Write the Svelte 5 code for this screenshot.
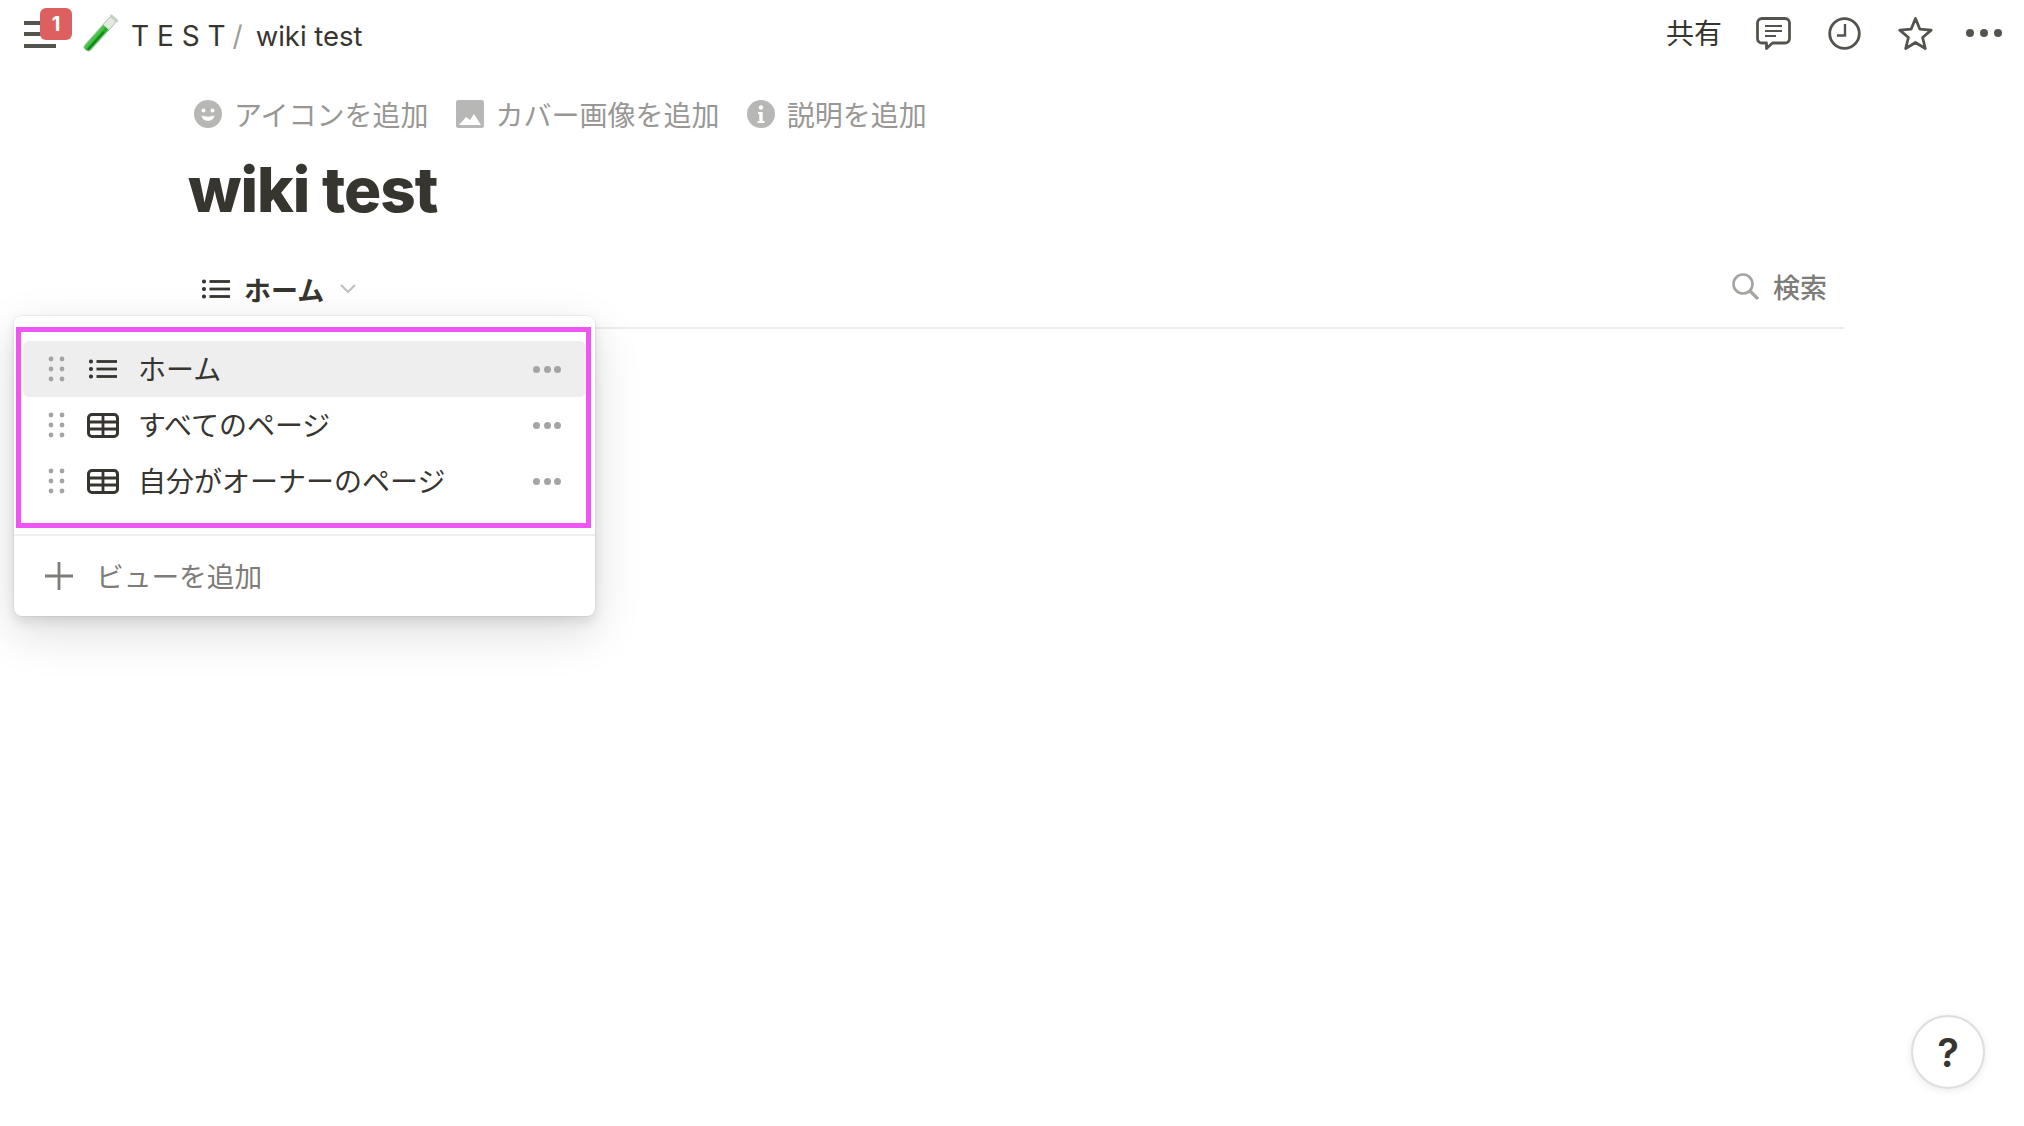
<script>
  const rows = [
    { label: 'ホーム', icon: 'list', active: true },
    { label: 'すべてのページ', icon: 'table' },
    { label: '自分がオーナーのページ', icon: 'table' }
  ];
</script>

{#snippet listIcon(cls)}
  <svg class={cls} viewBox="0 0 28 20" aria-hidden="true">
    <circle cx="2" cy="2.5" r="2.1" /><circle cx="2" cy="10" r="2.1" /><circle cx="2" cy="17.5" r="2.1" />
    <rect x="7.5" y="1.1" width="20.5" height="2.8" /><rect x="7.5" y="8.6" width="20.5" height="2.8" /><rect x="7.5" y="16.1" width="20.5" height="2.8" />
  </svg>
{/snippet}

<div class="page">
  <header class="topbar">
    <div class="crumbs">
      <div class="burger">
        <span></span><span></span><span></span>
        <b class="badge">1</b>
      </div>
      <svg class="tube" viewBox="0 0 34 36" aria-hidden="true">
        <g transform="rotate(42 17 18)">
          <rect x="13" y="-3.500" width="8" height="43" rx="4" fill="#e3ebe1" stroke="#a3b3a0" stroke-width="0.8" />
          <path d="M13.600 9h6.800v26.500a3.400 3.400 0 0 1-6.800 0z" fill="#25ad2a" />
          <path d="M13.600 9h3v30h-3z" fill="#5dcc5a" opacity="0.7" />
          <path d="M18.500 14v24" stroke="#12801a" stroke-width="1.600" />
          <rect x="12" y="-4.500" width="10" height="3" rx="1.200" fill="#c5cfc3" />
        </g>
      </svg>
      <span class="space">T E S T</span>
      <span class="slash">/</span>
      <span class="crumb">wiki test</span>
    </div>
    <div class="tools">
      <span class="share">共有</span>
      <svg class="tool comment" viewBox="0 0 35 33" aria-hidden="true">
        <path d="M6 1.500h23a4.500 4.500 0 0 1 4.500 4.500v15.500a4.500 4.500 0 0 1-4.500 4.500h-12.500l-6 5.500v-5.500h-4.500a4.500 4.500 0 0 1-4.500-4.500v-15.500a4.500 4.500 0 0 1 4.500-4.500z" fill="none" stroke="#55534e" stroke-width="2.800" stroke-linejoin="round" />
        <path d="M9 9h17M9 14h17M9 19h11" fill="none" stroke="#55534e" stroke-width="2.200" />
      </svg>
      <svg class="tool clock" viewBox="0 0 33 33" aria-hidden="true">
        <circle cx="16.500" cy="16.500" r="14.800" fill="none" stroke="#55534e" stroke-width="2.800" />
        <path d="M17 7v11.500h-8" fill="none" stroke="#55534e" stroke-width="2.400" />
      </svg>
      <svg class="tool star" viewBox="0 0 35 34" aria-hidden="true">
        <path d="M17.500 2.500l4.400 10.700 11.300.9-8.600 7.400 2.700 11-9.800-6-9.800 6 2.700-11-8.600-7.400 11.300-.9z" fill="none" stroke="#55534e" stroke-width="2.800" stroke-linejoin="round" />
      </svg>
      <div class="more"><i></i><i></i><i></i></div>
    </div>
  </header>

  <main class="content">
    <div class="actions">
      <span class="action">
        <svg class="act" viewBox="0 0 28 28" aria-hidden="true">
          <circle cx="14" cy="14" r="14" fill="#b7b7b5" />
          <circle cx="9.500" cy="10.500" r="2" fill="#fff" /><circle cx="18.500" cy="10.500" r="2" fill="#fff" />
          <path d="M7.500 15.500c1 7 12 7 13 0-4 1.500-9 1.500-13 0z" fill="#fff" />
        </svg>
        <span class="action-text">アイコンを追加</span>
      </span>
      <span class="action">
        <svg class="act" viewBox="0 0 28 28" aria-hidden="true">
          <rect width="28" height="28" rx="2.500" fill="#b7b7b5" />
          <path d="M3 25l7-8 4 3 4-6 7 11z" fill="#fff" />
        </svg>
        <span class="action-text">カバー画像を追加</span>
      </span>
      <span class="action">
        <svg class="act" viewBox="0 0 28 28" aria-hidden="true">
          <circle cx="14" cy="14" r="14" fill="#b7b7b5" />
          <circle cx="14" cy="7.500" r="2.200" fill="#fff" />
          <path d="M11 12h4.700v9H17.500v2h-7v-2h1.800v-7H11z" fill="#fff" />
        </svg>
        <span class="action-text">説明を追加</span>
      </span>
    </div>

    <h1>wiki test</h1>

    <div class="tabs">
      <div class="tab">
        {@render listIcon('tab-icon')}
        <span>ホーム</span>
        <svg class="chev" viewBox="0 0 16 10" aria-hidden="true"><path d="M1 1l7 7 7-7" fill="none" stroke="#c3c2bf" stroke-width="2.200" /></svg>
      </div>
      <div class="search">
        <svg class="mag" viewBox="0 0 27 27" aria-hidden="true">
          <circle cx="11" cy="11" r="9.500" fill="none" stroke="#a5a4a0" stroke-width="2.600" />
          <path d="M18 18l8 8" fill="none" stroke="#a5a4a0" stroke-width="3.200" />
        </svg>
        <span>検索</span>
      </div>

      <div class="menu">
        <div class="marked">
          {#each rows as row}
            <div class="row" class:active={row.active}>
              <svg class="grip" viewBox="0 0 15 24" aria-hidden="true">
                {#each [2, 12, 22] as y}
                  <circle cx="2" cy={y} r="2.400" /><circle cx="13" cy={y} r="2.400" />
                {/each}
              </svg>
              {#if row.icon === 'list'}
                <div class="icon-box">{@render listIcon('row-list')}</div>
              {:else}
                <div class="icon-box">
                  <svg class="row-table" viewBox="0 0 32 25" aria-hidden="true">
                    <rect x="1.500" y="1.500" width="29" height="22" rx="3.500" fill="none" stroke="#37352f" stroke-width="3" />
                    <path d="M1 9h30M1 16h30M16 1v23" fill="none" stroke="#37352f" stroke-width="2.800" />
                  </svg>
                </div>
              {/if}
              <span class="label">{row.label}</span>
              <div class="dots"><i></i><i></i><i></i></div>
            </div>
          {/each}
        </div>
        <div class="add">
          <svg class="plus" viewBox="0 0 28 28" aria-hidden="true"><path d="M14 0v28M0 14h28" fill="none" stroke="#7d7c78" stroke-width="2.800" /></svg>
          <span class="add-text">ビューを追加</span>
        </div>
      </div>
    </div>
  </main>

  <button class="help">?</button>
</div>

<style>
  :global(body) {
    margin: 0;
    background: #fff;
    font-family: "Inter", "Noto Sans CJK JP", sans-serif;
    color: #37352f;
  }
  .page {
    position: relative;
    height: 1126px;
    overflow: hidden;
  }
  .topbar {
    display: flex;
    justify-content: space-between;
    align-items: center;
    height: 66px;
    padding: 0 22px 0 24px;
  }
  .crumbs, .tools {
    display: flex;
    align-items: center;
  }
  .crumbs { font-size: 28px; }
  .burger {
    position: relative;
    display: flex;
    flex-direction: column;
    justify-content: space-between;
    width: 32px;
    height: 27px;
    margin-top: 2px;
  }
  .burger span {
    display: block;
    height: 4px;
    background: #55534e;
  }
  .badge {
    position: absolute;
    left: 16px;
    top: -13px;
    width: 32px;
    height: 32px;
    display: flex;
    align-items: center;
    justify-content: center;
    border-radius: 6px;
    background: #de5f5f;
    color: #fff;
    font-size: 20px;
    font-weight: 700;
  }
  .tube {
    width: 34px;
    height: 36px;
    margin-left: 27px;
    margin-top: 2px;
    overflow: visible;
  }
  .space { margin-left: 14px; padding-top: 5px; }
  .slash { margin-left: 7px; color: #9d9c98; padding-top: 5px; }
  .crumb { margin-left: 13px; padding-top: 5px; font-size: 27.500px; }
  .share {
    font-size: 28px;
    margin-right: 34px;
    padding-bottom: 2px;
  }
  .tool { display: block; }
  .comment { width: 35px; height: 33px; margin-right: 37px; }
  .clock { width: 33px; height: 33px; margin-right: 37px; }
  .star { width: 35px; height: 34px; margin-right: 33px; }
  .more, .dots {
    display: flex;
    justify-content: space-between;
  }
  .more { width: 36px; }
  .more i {
    width: 8px;
    height: 8px;
    border-radius: 50%;
    background: #55534e;
  }
  .content {
    padding: 0 180px 0 189px;
  }
  .actions {
    display: flex;
    gap: 27px;
    margin-top: 27px;
    height: 40px;
    align-items: center;
    padding-left: 5px;
  }
  .action {
    display: flex;
    align-items: center;
    gap: 12px;
    font-size: 28px;
    color: #989794;
  }
  .action-text { padding-top: 2px; }
  .act { width: 28px; height: 28px; margin-top: 2px; }
  h1 {
    margin: 21px 0 0 -1px;
    font-size: 62px;
    font-weight: 800;
    line-height: 72px;
    letter-spacing: -1px;
  }
  .tabs {
    position: relative;
    display: flex;
    justify-content: space-between;
    align-items: center;
    height: 70px;
    margin-top: 33px;
    border-bottom: 2px solid #ededec;
    padding-bottom: 8px;
    box-sizing: border-box;
  }
  .tab {
    display: flex;
    align-items: center;
    margin-left: 13px;
    font-size: 27px;
    font-weight: 700;
  }
  .tab-icon { width: 28px; height: 20px; margin-right: 14px; fill: #37352f; }
  .chev { width: 16px; height: 10px; margin-left: 16px; }
  .search {
    display: flex;
    align-items: center;
    gap: 14px;
    margin-right: 17px;
    margin-bottom: 5px;
    font-size: 27px;
    font-weight: 500;
    color: #7d7c78;
  }
  .mag { width: 27px; height: 27px; }
  .menu {
    position: absolute;
    left: -175px;
    top: 57px;
    width: 581px;
    height: 300px;
    padding: 11px 4px 0 2px;
    box-sizing: border-box;
    background: #fff;
    border-radius: 8px;
    box-shadow: 0 0 0 1px rgba(15, 15, 15, 0.05), 0 6px 12px rgba(15, 15, 15, 0.1), 0 16px 48px rgba(15, 15, 15, 0.14);
    display: flex;
    flex-direction: column;
  }
  .marked {
    border: 5px solid #ee55f3;
    height: 201px;
    box-sizing: border-box;
    padding: 9px 0 0 2px;
  }
  .row {
    display: flex;
    align-items: center;
    height: 56px;
    border-radius: 6px;
    padding: 0 25px 0 26px;
    box-sizing: border-box;
  }
  .row.active { background: #eeeeee; }
  .grip { width: 15px; height: 24px; fill: #a5a4a2; overflow: visible; }
  .icon-box {
    width: 32px;
    margin-left: 23px;
    display: flex;
    justify-content: center;
  }
  .row-list { width: 28px; height: 20px; fill: #37352f; }
  .row-table { width: 32px; height: 25px; }
  .label {
    flex: 1;
    margin-left: 19px;
    font-size: 28px;
    padding-bottom: 2px;
  }
  .dots { width: 28px; }
  .dots i {
    width: 7px;
    height: 7px;
    border-radius: 50%;
    background: #a5a4a2;
  }
  .add {
    display: flex;
    align-items: center;
    margin: 6px -4px 0 -2px;
    padding: 0 0 0 31px;
    flex: 1;
    border-top: 2px solid #eeeeee;
    color: #7d7c78;
  }
  .add-text { font-size: 27.700px; padding-bottom: 2px; }
  .plus { width: 28px; height: 28px; margin-right: 23px; }
  .help {
    position: absolute;
    left: 1911px;
    top: 1015px;
    width: 74px;
    height: 74px;
    padding: 0;
    border: 2px solid #dededd;
    border-radius: 50%;
    background: #fff;
    box-shadow: 0 2px 8px rgba(15, 15, 15, 0.08);
    font: 600 40px "Inter", sans-serif;
    color: #37352f;
  }
</style>
